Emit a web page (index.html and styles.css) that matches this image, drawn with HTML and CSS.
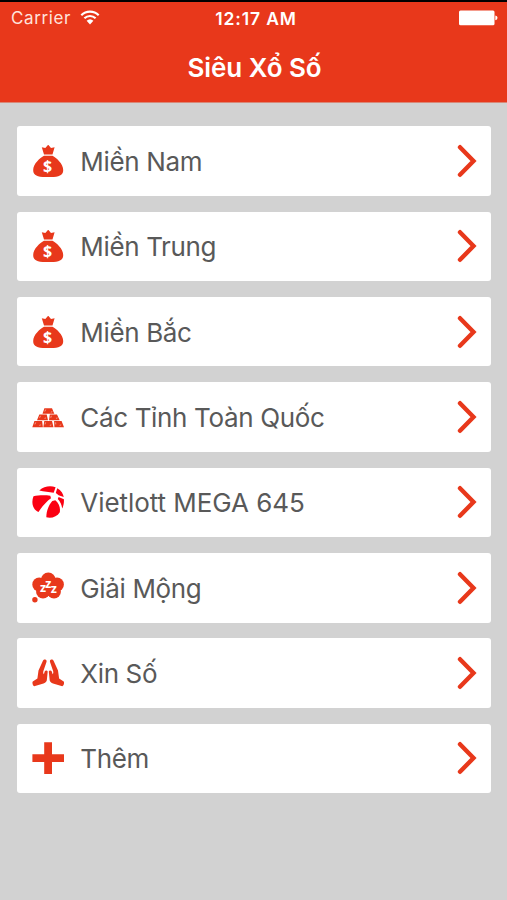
FILE: index.html
```html
<!DOCTYPE html>
<html lang="vi">
<head>
    <meta charset="UTF-8">
    <meta name="viewport" content="width=device-width, initial-scale=1.0">
    <title>Siêu Xổ Số</title>
    <link rel="stylesheet" href="styles.css">
</head>
<body>
    <svg class="symbols" aria-hidden="true">
        <symbol id="bag" viewBox="0 0 32 32">
            <path d="M9.800 2.200L13.300 3L16.200 -.3L19 3L22.600 2.200L20.500 9.600H12z"/>
            <path d="M12 10.800h8.500c4 2.300 10.700 8 10.700 14.200c0 5-3 7.200-15 7.200s-15-2.200-15-7.200C1.200 18.800 8 13.100 12 10.800z"/>
            <text class="dollar" x="15.500" y="26.800">$</text>
        </symbol>
        <symbol id="gold" viewBox="0 0 32 32">
            <path d="M12.400 7.200h7.600l2.300 5.500H10.500z"/>
            <path d="M7.300 13.500h7.400l1.300 5.700H5zM17.800 13.500h7.200l2.700 5.700H17z"/>
            <path d="M2.400 20h7.700l.8 6.200H.3zM12.300 20h7.700l1.500 6.200H11.300zM22.100 20h7.500l2.400 6.200h-9.600z"/>
            <path class="shine" d="M13.700 8.500l-.9 2M8.500 14.800l-.9 2M19.300 14.800l-.5 2M3.700 21.400l-.8 2M13.600 21.400l-.6 2M23.600 21.400l.2 2M18.800 11.200l1.500-.5M12.500 17.400l1.500-.5M24 17.400l1.500-.5M7.300 24.400l1.500-.5M17.800 24.400l1.500-.5M27.700 24.400l1.500-.5"/>
        </symbol>
        <symbol id="ball" viewBox="0 0 32 32">
            <path d="M7.300 4.400C12 .2 18.500-.6 23.600 1.300L21.700 6.800C17 5.700 12 5.500 7.300 4.400z"/>
            <path d="M25.200 2.300C29.200 4.500 31.300 8 31.700 11.100L26.600 9.200L23.800 6.900z"/>
            <path d="M1.500 10.300C6 9.200 12.500 9 18.300 9.700L19 12.300C14.500 15.500 10 20.500 6.500 26C.2 23.500-.8 16 1.500 10.300z"/>
            <path d="M20.300 15L23.300 14.300C27 17.500 28.500 21.500 27.800 26.200C25 30.800 19.700 32.500 14.300 31.300C14.300 25.500 16.600 19 20.300 15z"/>
            <path d="M26.600 11L31.900 13.300C32.200 16.600 31.300 20.300 30.200 22.600C29.700 18.500 28.200 15.600 25.800 13z"/>
        </symbol>
        <symbol id="dream" viewBox="0 0 32 32">
            <circle cx="16.300" cy="8" r="7.400"/>
            <circle cx="7.200" cy="12.500" r="6.900"/>
            <circle cx="25" cy="12.500" r="6.900"/>
            <circle cx="11" cy="19.700" r="6.900"/>
            <circle cx="22" cy="19.700" r="6.900"/>
            <path d="M9 10h15v14H9z"/>
            <circle cx="2.900" cy="27.800" r="2.700"/>
            <text class="zzz" x="7.900" y="20.200">z</text>
            <text class="zzz" x="13.300" y="16">z</text>
            <text class="zzz" x="18.700" y="21">z</text>
        </symbol>
        <symbol id="hands" viewBox="0 0 32 32">
            <path id="hand" d="M13.800 2.800c-1.400-.7-2.600 0-3.100 1.500L6.500 13.500L5.400 21.500L.8 24.600C-.1 25.600.8 29 2.200 29.200L11.500 26.500C13.900 25.700 14.900 24.200 14.900 22.500L15.700 14.500C15.300 13.200 13.400 13.200 12.700 14.500L11.900 17.300C11.200 16.500 11 15.500 11.400 14L14.400 5.200C14.800 4.200 14.600 3.300 13.800 2.800z"/>
            <use href="#hand" transform="matrix(-1 0 0 1 32.500 0)"/>
        </symbol>
        <symbol id="plus" viewBox="0 0 32 32">
            <path d="M12.200.3h7.800v12h12V20H20v12h-7.800V20H.4v-7.700h11.800z"/>
        </symbol>
        <symbol id="arrow" viewBox="0 0 20 34">
            <path d="M3 3.200L16.500 17L3 30.800"/>
        </symbol>
    </svg>

    <header class="header">
        <div class="status">
            <div class="carrier">
                <span>Carrier</span>
                <svg class="wifi" viewBox="0 0 20 15">
                    <path d="M1.300 5.200C6.200.4 13.800.4 18.700 5.200M4.400 8.300C7.600 5.200 12.400 5.200 15.600 8.300"/>
                    <path class="wifi-dot" d="M6.600 10.700Q10 7.700 13.400 10.700L10 14.400z"/>
                </svg>
            </div>
            <div class="time">12:17 AM</div>
            <svg class="battery" viewBox="0 0 39 16">
                <rect x="0" y=".5" width="35.500" height="14.700" rx="1.500"/>
                <path d="M36.300 5.400Q38.500 5.700 38.500 7.800T36.300 10.200z"/>
            </svg>
        </div>
        <h1 class="title">Siêu Xổ Số</h1>
    </header>

    <main class="menu">
        <a class="item">
            <svg class="icon"><use href="#bag"/></svg>
            <span class="label">Miền Nam</span>
            <svg class="arrow"><use href="#arrow"/></svg>
        </a>
        <a class="item">
            <svg class="icon"><use href="#bag"/></svg>
            <span class="label">Miền Trung</span>
            <svg class="arrow"><use href="#arrow"/></svg>
        </a>
        <a class="item">
            <svg class="icon"><use href="#bag"/></svg>
            <span class="label">Miền Bắc</span>
            <svg class="arrow"><use href="#arrow"/></svg>
        </a>
        <a class="item">
            <svg class="icon"><use href="#gold"/></svg>
            <span class="label">Các Tỉnh Toàn Quốc</span>
            <svg class="arrow"><use href="#arrow"/></svg>
        </a>
        <a class="item">
            <svg class="icon icon-ball"><use href="#ball"/></svg>
            <span class="label label-mega">Vietlott MEGA 645</span>
            <svg class="arrow"><use href="#arrow"/></svg>
        </a>
        <a class="item">
            <svg class="icon"><use href="#dream"/></svg>
            <span class="label">Giải Mộng</span>
            <svg class="arrow"><use href="#arrow"/></svg>
        </a>
        <a class="item">
            <svg class="icon"><use href="#hands"/></svg>
            <span class="label">Xin Số</span>
            <svg class="arrow"><use href="#arrow"/></svg>
        </a>
        <a class="item">
            <svg class="icon"><use href="#plus"/></svg>
            <span class="label">Thêm</span>
            <svg class="arrow"><use href="#arrow"/></svg>
        </a>
    </main>
</body>
</html>
```
FILE: styles.css
```css
* {
    box-sizing: border-box;
}
body {
    margin: 0;
    height: 900px;
    background-color: #d2d2d2;
    font-family: Inter, "Liberation Sans", sans-serif;
    overflow: hidden;
}
.symbols {
    display: none;
}
.header {
    height: 103px;
    background-color: #e8381b;
    border-top: 2px solid #000;
    border-bottom: 1px solid #d88878;
    color: #fff;
}
.status {
    display: grid;
    grid-template-columns: 1fr auto 1fr;
    align-items: center;
    height: 32px;
    padding: 0 9px 0 11px;
    font-size: 17px;
}
.carrier {
    display: flex;
    align-items: center;
    gap: 9px;
    color: #ffe3dc;
    letter-spacing: 0.6px;
}
.wifi {
    width: 20px;
    height: 15px;
    margin-bottom: 2px;
    fill: none;
    stroke: #fff;
    stroke-width: 2.2;
}
.wifi-dot {
    fill: #fff;
    stroke: none;
}
.time {
    padding-left: 3px;
    font-size: 17.5px;
    font-weight: 600;
    letter-spacing: 0.85px;
}
.battery {
    width: 39px;
    height: 16px;
    justify-self: end;
    fill: #fff;
}
.title {
    margin: 0;
    padding-left: 2px;
    height: 68px;
    line-height: 68px;
    text-align: center;
    font-size: 26px;
    font-weight: 600;
    letter-spacing: -0.05px;
}
.menu {
    display: flex;
    flex-direction: column;
    gap: 15.85px;
    padding: 23.3px 16px 0 17px;
}
.item {
    display: flex;
    align-items: center;
    height: 69.5px;
    padding: 0 14px 0 15px;
    background-color: #fff;
    border-radius: 3px;
}
.icon {
    width: 32px;
    height: 32px;
    margin-right: 16.3px;
    fill: #e8381b;
}
.icon-ball {
    fill: #fb0012;
}
.label {
    flex: 1;
    padding-top: 1px;
    color: #595959;
    font-size: 26px;
    letter-spacing: -0.35px;
    white-space: nowrap;
}
.label-mega {
    letter-spacing: -0.05px;
}
.arrow {
    width: 20px;
    height: 34px;
    fill: none;
    stroke: #e8381b;
    stroke-width: 4.4;
    stroke-linecap: round;
    stroke-linejoin: miter;
}
.dollar {
    fill: #fff;
    font-family: "Open Sans", sans-serif;
    font-size: 16px;
    font-weight: 700;
    text-anchor: middle;
}
.shine {
    fill: none;
    stroke: #fbc3b8;
    stroke-width: 0.7;
}
.zzz {
    fill: #fff;
    font-family: "Open Sans", sans-serif;
    font-size: 12.5px;
    font-weight: 700;
}
```
